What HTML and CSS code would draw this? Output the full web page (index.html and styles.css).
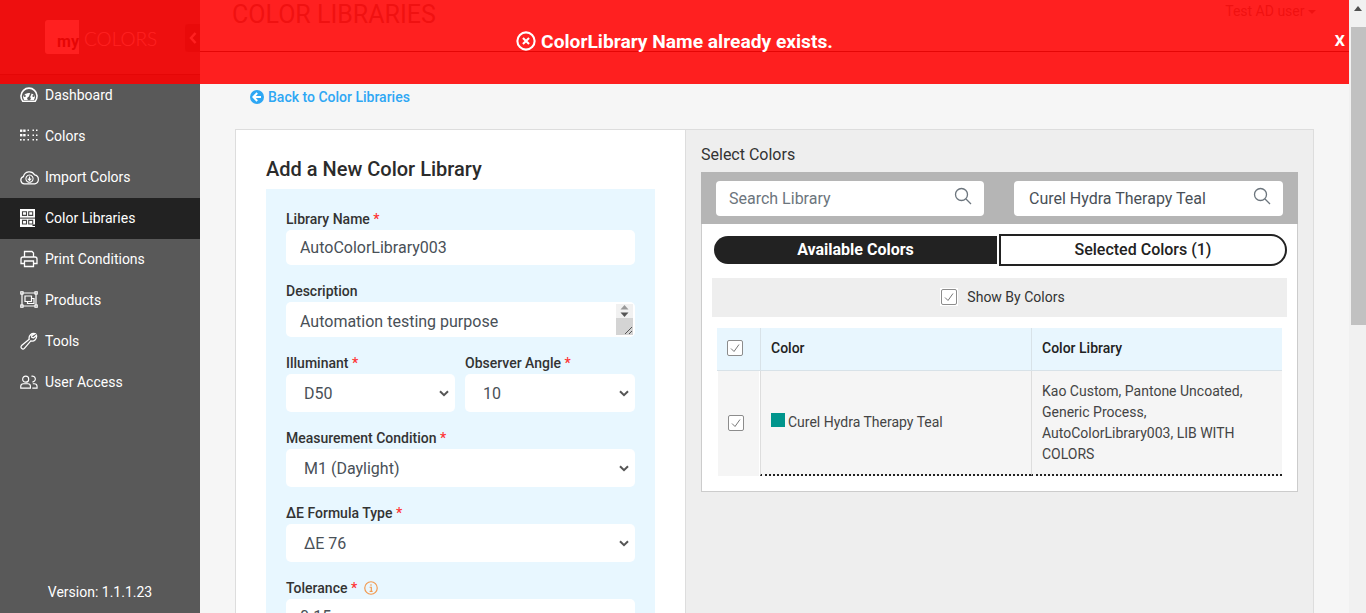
FILE: index.html

```html
<!DOCTYPE html>
<html lang="en">
<head>
  <meta charset="UTF-8" />
  <meta name="viewport" content="width=device-width, initial-scale=1.0" />
  <title>Add a New Color Library</title>
  <link rel="stylesheet" href="styles.css">
</head>
<body>
  <div class="page">
    <aside class="sidebar">
      <div class="brand">
        <div class="logo-box"><span>my</span></div>
        <span class="logo-name">COLORS</span>
        <div class="collapse-tab">
          <svg width="8" height="12" viewBox="0 0 8 12"><path d="M6.5 1 L2 6 L6.5 11" fill="none" stroke="#fff" stroke-width="2.4"/></svg>
        </div>
      </div>
      <nav class="nav">
        <a class="nav-item">
          <svg class="nav-icon" viewBox="0 0 18 18"><path d="M2.8 15.2 A8 8 0 1 1 15.2 15.2 Z" fill="none" stroke="#fff" stroke-width="1.6"/><path d="M3 11 A6.5 6.5 0 0 1 15 11 L14 14 H4 Z" fill="#fff"/><path d="M9 12 L11.5 6" stroke="#595959" stroke-width="1.5"/><circle cx="9" cy="12.5" r="1.8" fill="#595959"/><circle cx="4.8" cy="10" r="1" fill="#595959"/><circle cx="6.5" cy="6.2" r="1" fill="#595959"/><circle cx="13.4" cy="10" r="1" fill="#595959"/></svg>
          Dashboard
        </a>
        <a class="nav-item">
          <svg class="nav-icon" viewBox="0 0 18 18" fill="#fff"><rect x="0" y="2.5" width="2.4" height="2.4"/><rect x="3.2" y="2.5" width="2.4" height="2.4"/><rect x="7.5" y="2.5" width="1.5" height="1.5"/><rect x="12.5" y="2.5" width="1.5" height="1.5"/><rect x="16" y="2.5" width="1.5" height="1.5"/><rect x="0" y="7" width="2.4" height="2.4"/><rect x="3.2" y="7" width="2.4" height="2.4"/><rect x="7.5" y="7.5" width="1.5" height="1.5"/><rect x="12.5" y="7.5" width="1.5" height="1.5"/><rect x="16" y="7.5" width="1.5" height="1.5"/><rect x="0" y="12" width="1.6" height="1.6"/><rect x="3.2" y="12" width="1.6" height="1.6"/><rect x="7.5" y="12" width="1.5" height="1.5"/><rect x="12.5" y="12" width="1.5" height="1.5"/><rect x="16" y="12" width="1.5" height="1.5"/></svg>
          Colors
        </a>
        <a class="nav-item">
          <svg class="nav-icon wide" viewBox="0 0 20 16"><path d="M4.6 15.2 A3.9 3.9 0 0 1 3.6 7.6 A6.4 6.4 0 0 1 15.4 5.8 A4.8 4.8 0 0 1 15.6 15.2 Z" fill="none" stroke="#fff" stroke-width="1.3"/><path d="M6.4 11 A3.8 3.8 0 1 1 13.6 11 A3.8 3.8 0 0 1 10 13.6 A3.8 3.8 0 0 1 6.4 11 Z" fill="none" stroke="#fff" stroke-width="1.1"/><path d="M10 7.6 V11.4 M8.2 9.8 L10 11.6 L11.8 9.8" fill="none" stroke="#fff" stroke-width="1.2"/></svg>
          Import Colors
        </a>
        <a class="nav-item active">
          <svg class="nav-icon" viewBox="0 0 18 18"><rect x="0" y="0" width="15" height="18.5" fill="#fff"/><path d="M2.5 2.8 H6.5 V6.4 H2.5 Z M8.7 2.8 H12.7 V6.4 H8.7 Z M2.5 11.4 H6.5 V15 H2.5 Z M8.7 11.4 H12.7 V15 H8.7 Z" fill="none" stroke="#444" stroke-width="1.1"/><rect x="0" y="8.6" width="15" height="1" fill="#333"/><rect x="12.5" y="15.5" width="2.5" height="1.5" fill="#222"/></svg>
          Color Libraries
        </a>
        <a class="nav-item">
          <svg class="nav-icon" viewBox="0 0 18 18" fill="none" stroke="#fff" stroke-width="1.3"><path d="M4.5 7 V1.5 H12 L13.5 3 V7"/><path d="M4 13.5 H1 V9 Q1 7 3 7 H15 Q17 7 17 9 V13.5 H14"/><path d="M4.5 11 H13.5 V16.5 H4.5 Z"/></svg>
          Print Conditions
        </a>
        <a class="nav-item">
          <svg class="nav-icon" viewBox="0 0 18 18" fill="none" stroke="#fff" stroke-width="1.2"><path d="M2 2 H16 V15 H2 Z"/><path d="M5 5 H11.5 V10.5 H5 Z"/><path d="M7.5 10.5 V12.5 H14 V7.5 H11.5"/><rect x="0.8" y="0.8" width="2.2" height="2.2" fill="#595959"/><rect x="15" y="0.8" width="2.2" height="2.2" fill="#595959"/><rect x="0.8" y="14" width="2.2" height="2.2" fill="#595959"/><rect x="15" y="14" width="2.2" height="2.2" fill="#595959"/></svg>
          Products
        </a>
        <a class="nav-item">
          <svg class="nav-icon" viewBox="0 0 18 18" fill="none" stroke="#fff" stroke-width="1.3"><path d="M15 1.7 A4.6 4.6 0 0 0 9.2 7.2 L1.6 13.6 A1.9 1.9 0 0 0 4.4 16.4 L10.8 8.9 A4.6 4.6 0 0 0 16.4 3.2 L13.6 5.8 L11.9 5.4 L11.6 3.8 Z"/></svg>
          Tools
        </a>
        <a class="nav-item">
          <svg class="nav-icon" viewBox="0 0 19 18" fill="none" stroke="#fff" stroke-width="1.2"><circle cx="6" cy="6" r="3.2"/><path d="M0.8 15.5 V13.5 Q0.8 10.8 3.6 10.8 H8.4 Q11 10.8 11 13.5 V15.5 Z"/><path d="M12 3 A3.1 3.1 0 1 1 13 9"/><path d="M13.5 10.8 H15 Q18 10.8 18 13.5 V15.5 H13"/></svg>
          User Access
        </a>
      </nav>
      <div class="version">Version: 1.1.1.23</div>
    </aside>

    <main class="main">
      <header class="topbar">
        <h1>COLOR LIBRARIES</h1>
        <span class="user-menu">Test AD user <i class="caret"></i></span>
      </header>

      <a class="back-link">
        <svg width="14" height="14" viewBox="0 0 14 14"><circle cx="7" cy="7" r="7" fill="#2ea7f4"/><path d="M7.2 3 L3.4 7 L7.2 11 M3.8 7 H11" fill="none" stroke="#fff" stroke-width="2"/></svg>
        Back to Color Libraries
      </a>

      <section class="card">
        <div class="left-panel">
          <h2>Add a New Color Library</h2>
          <form class="form-box">
            <div class="field">
              <label>Library Name <b>*</b></label>
              <input class="control" type="text" value="AutoColorLibrary003">
            </div>
            <div class="field">
              <label>Description</label>
              <div class="text-wrap">
                <textarea class="control" rows="1">Automation testing purpose</textarea>
                <div class="fake-scroll">
                  <svg width="11" height="14" viewBox="0 0 11 14"><path d="M5.5 1 L9.5 5.5 H1.5 Z" fill="#999"/><path d="M5.5 13 L9.5 8.5 H1.5 Z" fill="#555"/></svg>
                  <div class="grip">
                    <svg width="11" height="11" viewBox="0 0 11 11"><path d="M10 3 L3 10 M10 7 L7 10" stroke="#555" stroke-width="1"/></svg>
                  </div>
                </div>
              </div>
            </div>
            <div class="field-row">
              <div class="field">
                <label>Illuminant <b>*</b></label>
                <select class="control select"><option>D50</option></select>
              </div>
              <div class="field">
                <label>Observer Angle <b>*</b></label>
                <select class="control select"><option>10</option></select>
              </div>
            </div>
            <div class="field">
              <label>Measurement Condition <b>*</b></label>
              <select class="control select"><option>M1 (Daylight)</option></select>
            </div>
            <div class="field">
              <label>ΔE Formula Type <b>*</b></label>
              <select class="control select"><option>ΔE 76</option></select>
            </div>
            <div class="field">
              <label>Tolerance <b>*</b>
                <svg class="info" width="14" height="14" viewBox="0 0 13 13"><circle cx="6.5" cy="6.5" r="5.8" fill="none" stroke="#f29a50" stroke-width="1.1"/><path d="M5.2 5.8 H6.8 V9.6 M5.2 9.6 H8 M6.5 3 V4.4" fill="none" stroke="#f29a50" stroke-width="1.1"/></svg>
              </label>
              <input class="control" type="text" value="0.15">
            </div>
          </form>
        </div>

        <div class="right-panel">
          <div class="select-title">Select Colors</div>
          <div class="select-box">
            <div class="search-bar">
              <div class="search">
                <input type="text" placeholder="Search Library">
                <svg class="search-icon" width="18" height="18" viewBox="0 0 18 18"><circle cx="7.5" cy="7.5" r="6" fill="none" stroke="#6c757d" stroke-width="1.3"/><path d="M12 12 L17 17" stroke="#6c757d" stroke-width="1.3"/></svg>
              </div>
              <div class="search">
                <input class="filled" type="text" value="Curel Hydra Therapy Teal">
                <svg class="search-icon" width="18" height="18" viewBox="0 0 18 18"><circle cx="7.5" cy="7.5" r="6" fill="none" stroke="#6c757d" stroke-width="1.3"/><path d="M12 12 L17 17" stroke="#6c757d" stroke-width="1.3"/></svg>
              </div>
            </div>

            <div class="tabs">
              <div class="tab tab-on">Available Colors</div>
              <div class="tab tab-off">Selected Colors (1)</div>
            </div>

            <div class="show-by">
              <span class="check-wrap"><span class="check"><svg width="14" height="14" viewBox="0 0 14 14"><path d="M3 7.5 L6 10.5 L11 3.5" fill="none" stroke="#777" stroke-width="1"/></svg></span></span>
              Show By Colors
            </div>

            <table class="colors">
              <thead>
                <tr>
                  <th class="col-check"><span class="check"><svg width="14" height="14" viewBox="0 0 14 14"><path d="M3 7.5 L6 10.5 L11 3.5" fill="none" stroke="#777" stroke-width="1"/></svg></span></th>
                  <th class="col-color">Color</th>
                  <th>Color Library</th>
                </tr>
              </thead>
              <tbody>
                <tr>
                  <td class="col-check"><span class="check"><svg width="14" height="14" viewBox="0 0 14 14"><path d="M3 7.5 L6 10.5 L11 3.5" fill="none" stroke="#777" stroke-width="1"/></svg></span></td>
                  <td><span class="swatch"></span>Curel Hydra Therapy Teal</td>
                  <td>Kao Custom, Pantone Uncoated, Generic Process, AutoColorLibrary003, LIB WITH COLORS</td>
                </tr>
              </tbody>
            </table>
          </div>
        </div>
      </section>
    </main>

    <div class="scrollbar">
      <svg width="17" height="17" viewBox="0 0 17 17"><path d="M9 6 L13 11 H5 Z" fill="#505050"/></svg>
      <div class="thumb"></div>
    </div>

    <div class="alert-banner">
      <div class="alert-msg">
        <svg width="20" height="20" viewBox="0 0 19 19"><circle cx="9.5" cy="9.5" r="8.2" fill="none" stroke="#fff" stroke-width="2"/><path d="M6.6 6.6 L12.4 12.4 M12.4 6.6 L6.6 12.4" stroke="#fff" stroke-width="2"/></svg>
        ColorLibrary Name already exists.
      </div>
      <span class="alert-close">x</span>
    </div>
  </div>
</body>
</html>
```

FILE: styles.css

```css
* {
  box-sizing: border-box;
}
body {
  margin: 0;
  font-family: Roboto, "Liberation Sans", sans-serif;
  font-size: 14px;
  color: #333;
  background: #f6f6f6;
}
.page {
  position: relative;
  display: flex;
  height: 100vh;
  overflow: hidden;
}

/* sidebar */
.sidebar {
  width: 200px;
  flex-shrink: 0;
  display: flex;
  flex-direction: column;
  background: #595959;
  color: #fff;
}
.brand {
  height: 75px;
  flex-shrink: 0;
  display: flex;
  align-items: flex-start;
  padding: 20px 0 0 45px;
  background: #777;
  border-bottom: 1px solid #333;
}
.logo-box {
  width: 34px;
  height: 34px;
  display: flex;
  align-items: flex-end;
  justify-content: flex-end;
  background: #fff;
  border-radius: 3px 0 0 3px;
  color: #333;
  font-size: 16px;
  font-weight: 700;
  line-height: 24px;
}
.logo-name {
  margin: 6px 0 0 5px;
  font-family: Lato, sans-serif;
  font-weight: 300;
  font-size: 19px;
  line-height: 26px;
  color: #fff;
}
.collapse-tab {
  width: 15px;
  height: 28px;
  margin: 4px 0 0 auto;
  display: flex;
  align-items: center;
  justify-content: center;
  background: #555;
  border-radius: 3px 0 0 3px;
}
.nav-item {
  height: 41px;
  display: flex;
  align-items: center;
  gap: 7px;
  padding: 0 0 1px 20px;
  color: #fff;
  font-size: 14px;
}
.nav-item.active {
  background: #222;
}
.nav-icon {
  width: 18px;
  height: 18px;
  flex-shrink: 0;
}
.nav-icon.wide {
  width: 19px;
  margin-right: -1px;
}
.version {
  margin-top: auto;
  height: 42px;
  text-align: center;
  line-height: 42px;
}

/* main */
.main {
  flex: 1;
  min-width: 0;
  overflow: hidden;
}
.topbar {
  height: 52px;
  display: flex;
  justify-content: space-between;
  padding: 0 33px 0 32px;
  background: #fff;
  border-bottom: 1px solid #333;
}
.topbar h1 {
  margin: 0;
  font-size: 25px;
  font-weight: 400;
  line-height: 30px;
  color: #888;
}
.user-menu {
  line-height: 22px;
  color: #888;
}
.caret {
  display: inline-block;
  margin-left: 0;
  vertical-align: 2px;
  border-top: 4px solid #888;
  border-left: 4px solid transparent;
  border-right: 4px solid transparent;
}
.back-link {
  display: flex;
  align-items: center;
  gap: 4px;
  margin: 34px 0 0 50px;
  height: 21px;
  color: #2ea7f4;
  font-weight: 500;
}
.card {
  display: flex;
  margin: 22px 35px 0;
  min-height: 600px;
  border: 1px solid #ddd;
  background: #eee;
}
.left-panel {
  width: 450px;
  flex-shrink: 0;
  padding: 25px 30px 0;
  background: #fff;
  border-right: 1px solid #ddd;
}
.left-panel h2 {
  margin: 0 0 6px;
  font-size: 20px;
  font-weight: 500;
  line-height: 28px;
  color: #2b2b2b;
}
.form-box {
  padding: 20px 20px 20px;
  background: #e8f7ff;
}
.field {
  margin-bottom: 16px;
}
.field label {
  display: block;
  height: 21px;
  line-height: 21px;
  font-weight: 500;
  color: #333;
}
.field label b {
  color: #f33;
  font-weight: 500;
}
.info {
  margin-left: 3px;
  vertical-align: -2px;
}
.field-row {
  display: grid;
  grid-template-columns: 169px 170px;
  gap: 10px;
}
.control {
  display: block;
  width: 100%;
  height: 35px;
  padding: 0 14px;
  border: none;
  border-radius: 5px;
  background: #fff;
  color: #495057;
  font-family: Roboto, sans-serif;
  font-size: 16px;
  outline: none;
}
textarea.control {
  padding-top: 9px;
  line-height: 22px;
  resize: none;
  overflow: hidden;
}
.select {
  height: 38px;
  padding-left: 18px;
  appearance: none;
  background: #fff url("data:image/svg+xml,%3Csvg xmlns='http://www.w3.org/2000/svg' width='10' height='7'%3E%3Cpath d='M1 1.2 L5 5.2 L9 1.2' fill='none' stroke='%23555' stroke-width='2'/%3E%3C/svg%3E") no-repeat right 6px center;
}
.text-wrap {
  position: relative;
}
.fake-scroll {
  position: absolute;
  top: 2px;
  right: 2px;
  width: 17px;
  height: 31px;
  display: flex;
  flex-direction: column;
  align-items: center;
  background: #f1f1f1;
}
.fake-scroll svg {
  display: block;
}
.grip {
  flex: 1;
  width: 100%;
  background: #d4d4d4;
  display: flex;
  justify-content: flex-end;
  align-items: flex-end;
}

/* right side */
.right-panel {
  flex: 1;
  padding: 14px 15px 0;
}
.select-title {
  height: 22px;
  line-height: 22px;
  font-size: 16px;
  margin-bottom: 6px;
}
.select-box {
  background: #fff;
  border: 1px solid #ccc;
  border-top: none;
  padding-bottom: 15px;
}
.search-bar {
  display: grid;
  grid-template-columns: 268px 269px;
  gap: 30px;
  height: 52px;
  margin: 0 -1px;
  padding: 9px 0 0 15px;
  background: #b5b5b5;
}
.search {
  position: relative;
  height: 35px;
  background: #fff;
  border-radius: 4px;
}
.search input {
  width: 100%;
  height: 35px;
  padding: 0 13px;
  border: none;
  background: none;
  font-family: Roboto, sans-serif;
  font-size: 16px;
  color: #495057;
  outline: none;
}
.search input::placeholder {
  color: #6c757d;
  opacity: 1;
}
.search input.filled {
  padding-left: 15px;
}
.search-icon {
  position: absolute;
  top: 6px;
  right: 12px;
}
.tabs {
  display: flex;
  align-items: center;
  gap: 2px;
  padding: 10px 10px 0 12px;
}
.tab {
  text-align: center;
  font-size: 16px;
  font-weight: 500;
}
.tab-on {
  width: 283px;
  height: 28px;
  line-height: 28px;
  background: #222;
  color: #fff;
  font-weight: 700;
  border-radius: 14px 0 0 14px;
}
.tab-off {
  flex: 1;
  height: 32px;
  line-height: 28px;
  background: #fff;
  color: #222;
  border: 2px solid #222;
  border-radius: 0 16px 16px 0;
}
.show-by {
  display: flex;
  align-items: center;
  justify-content: center;
  gap: 9px;
  height: 39px;
  margin: 12px 10px 0;
  padding: 0 0 1px 6px;
  background: #eee;
}
.check-wrap {
  display: inline-flex;
  padding: 1px;
  background: #fff;
}
.check {
  display: inline-flex;
  width: 16px;
  height: 16px;
  align-items: center;
  justify-content: center;
  background: #fff;
  border: 1px solid #8c8c8c;
  border-radius: 2px;
}
.colors {
  width: 565px;
  margin: 11px 0 0 15px;
  border-collapse: separate;
  border-spacing: 0;
  table-layout: fixed;
}
.colors th {
  height: 43px;
  padding: 0 10px 3px;
  background: #e8f6fe;
  border-left: 1px solid #d8e2e8;
  border-bottom: 1px solid #d8e2e8;
  text-align: left;
  font-weight: 500;
  color: #222;
}
.colors td {
  height: 105px;
  padding: 0 10px;
  background: #f5f5f5;
  border-left: 1px solid #ddd;
  border-bottom: 2px dotted #222;
  line-height: 21px;
  color: #444;
}
.colors .col-check {
  width: 43px;
  padding: 0 0 0 10px;
  border-left: none;
}
.colors td.col-check {
  padding: 4px 0 0 10px;
  border-bottom: none;
  border-left: 1px solid #fff;
  border-right: 1px solid #fff;
  height: 103px;
}
.colors .col-color {
  width: 271px;
}
.swatch {
  display: inline-block;
  width: 14px;
  height: 14px;
  margin-right: 3px;
  background: #00958c;
}

/* overlay and scrollbar */
.scrollbar {
  width: 17px;
  flex-shrink: 0;
  background: #f1f1f1;
}
.scrollbar svg {
  display: block;
}
.thumb {
  width: 15px;
  height: 298px;
  margin: 10px 0 0 2px;
  background: #c1c1c1;
}
.alert-banner {
  position: absolute;
  top: 0;
  left: 0;
  right: 17px;
  height: 84px;
  padding-top: 30px;
  background: rgba(255, 0, 0, 0.875);
  color: #fff;
}
.alert-msg {
  display: flex;
  justify-content: center;
  align-items: center;
  gap: 5px;
  height: 22px;
  font-size: 19.2px;
  font-weight: 700;
}
.alert-close {
  position: absolute;
  top: 27px;
  right: 4px;
  font-size: 21px;
  font-weight: 500;
  line-height: 24px;
}
```
